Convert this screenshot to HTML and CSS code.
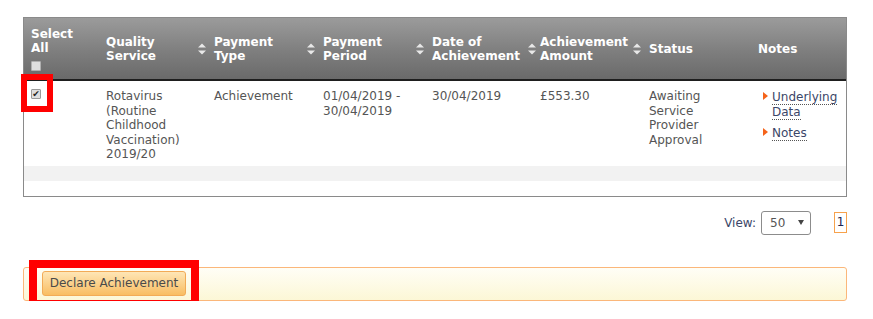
FILE: index.html
```html
<!DOCTYPE html>
<html lang="en">
<head>
    <meta charset="UTF-8">
    <title>Declare Achievement</title>
    <link rel="stylesheet" href="styles.css">
</head>
<body>
    <div class="page">
        <div class="grid">
            <table class="results">
                <colgroup>
                    <col style="width: 65px">
                    <col style="width: 108px">
                    <col style="width: 109px">
                    <col style="width: 109px">
                    <col style="width: 112px">
                    <col style="width: 105px">
                    <col style="width: 118px">
                    <col style="width: 96px">
                </colgroup>
                <thead>
                    <tr>
                        <th class="col-select">Select<br>All<span class="check"></span></th>
                        <th class="col-plain">Quality<br>Service</th>
                        <th class="sortable">
                            <div class="sort-head">
                                <svg class="sort-icon" viewBox="0 0 8 12"><polygon points="0,4.5 4,0.5 8,4.5"/><polygon points="0,7.5 8,7.5 4,11.5"/></svg>
                                <span>Payment<br>Type</span>
                            </div>
                        </th>
                        <th class="sortable">
                            <div class="sort-head">
                                <svg class="sort-icon" viewBox="0 0 8 12"><polygon points="0,4.5 4,0.5 8,4.5"/><polygon points="0,7.5 8,7.5 4,11.5"/></svg>
                                <span>Payment<br>Period</span>
                            </div>
                        </th>
                        <th class="sortable">
                            <div class="sort-head">
                                <svg class="sort-icon" viewBox="0 0 8 12"><polygon points="0,4.5 4,0.5 8,4.5"/><polygon points="0,7.5 8,7.5 4,11.5"/></svg>
                                <span>Date of<br>Achievement</span>
                            </div>
                        </th>
                        <th class="sortable">
                            <div class="sort-head tight">
                                <svg class="sort-icon" viewBox="0 0 8 12"><polygon points="0,4.5 4,0.5 8,4.5"/><polygon points="0,7.5 8,7.5 4,11.5"/></svg>
                                <span>Achievement<br>Amount</span>
                            </div>
                        </th>
                        <th class="sortable">
                            <div class="sort-head">
                                <svg class="sort-icon" viewBox="0 0 8 12"><polygon points="0,4.5 4,0.5 8,4.5"/><polygon points="0,7.5 8,7.5 4,11.5"/></svg>
                                <span>Status</span>
                            </div>
                        </th>
                        <th class="col-notes">Notes</th>
                    </tr>
                </thead>
                <tbody>
                    <tr class="row">
                        <td class="col-select"><span class="check checked">&#10004;</span></td>
                        <td>Rotavirus (Routine Childhood Vaccination) 2019/20</td>
                        <td>Achievement</td>
                        <td>01/04/2019 - 30/04/2019</td>
                        <td>30/04/2019</td>
                        <td class="amount">&pound;553.30</td>
                        <td>Awaiting Service Provider Approval</td>
                        <td class="col-notes">
                            <ul class="note-links">
                                <li><a href="#">Underlying Data</a></li>
                                <li><a href="#">Notes</a></li>
                            </ul>
                        </td>
                    </tr>
                    <tr class="stripe"><td colspan="8"></td></tr>
                </tbody>
            </table>
            <div class="grid-foot"></div>
        </div>

        <div class="pager">
            <span class="view-label">View:</span>
            <div class="view-select">
                <span>50</span>
                <svg class="caret" viewBox="0 0 6 5"><polygon points="0,0 6,0 3,5"/></svg>
            </div>
            <span class="page-num">1</span>
        </div>

        <div class="action-bar">
            <button class="declare-btn">Declare Achievement</button>
        </div>

        <div class="mark mark-check"></div>
        <div class="mark mark-button"></div>
    </div>
</body>
</html>
```

FILE: styles.css
```css
* {
    margin: 0;
    padding: 0;
    box-sizing: border-box;
}

body {
    font-family: "DejaVu Sans", Verdana, sans-serif;
    font-size: 12px;
    color: #555;
    background: #fff;
    padding: 17px 26px 0 23px;
}

.page {
    position: relative;
    width: 824px;
}

.grid {
    border: 1px solid #8a8a8a;
}

.results {
    width: 100%;
    table-layout: fixed;
    border-collapse: collapse;
}

.results th {
    background: linear-gradient(#9b9b9b 0%, #7e7e7e 55%, #6a6a6a 100%);
    color: #fff;
    font-weight: bold;
    text-align: left;
    vertical-align: middle;
    line-height: 14px;
    padding: 8px 0;
    border-bottom: 2px solid #1e1e1e;
    height: 62px;
}

.results th.col-select {
    padding-left: 7px;
}

.results th.col-plain {
    padding-left: 17px;
}

.results th.sortable {
    padding-left: 1px;
}

.results th.col-notes {
    padding-left: 8px;
}

.sort-head {
    display: flex;
    align-items: center;
    gap: 8px;
}

.sort-head.tight {
    gap: 4px;
}

.sort-icon {
    width: 8px;
    height: 12px;
    flex-shrink: 0;
    fill: #e8e8e8;
}

.check {
    display: block;
    width: 10px;
    height: 10px;
    margin-top: 6px;
    background: #dedede;
    border: 1px solid #b0b0b0;
    border-radius: 1px;
}

.check.checked {
    margin-top: 0;
    font-size: 9px;
    line-height: 8px;
    color: #222;
    text-align: center;
    border-color: #9a9a9a;
}

.results td {
    vertical-align: top;
    line-height: 14.5px;
    padding: 8px 6px 4px 17px;
}

.results td.col-select {
    padding-left: 7px;
}

.results td.amount {
    padding-left: 13px;
}

.results td.col-notes {
    padding-left: 13px;
    padding-right: 4px;
}

.stripe td {
    background: #f2f2f2;
    height: 15px;
    padding: 0;
}

.grid-foot {
    height: 15px;
}

.note-links {
    list-style: none;
    padding-top: 1px;
}

.note-links li {
    position: relative;
    padding-left: 9px;
    margin-bottom: 7px;
}

.note-links li::before {
    content: "";
    position: absolute;
    left: 0;
    top: 2px;
    border-left: 5px solid #f5631a;
    border-top: 4.5px solid transparent;
    border-bottom: 4.5px solid transparent;
}

.note-links a {
    color: #3b4668;
    text-decoration: none;
    border-bottom: 1px dotted #555;
}

.pager {
    display: flex;
    justify-content: flex-end;
    align-items: center;
    margin-top: 14px;
    color: #3b4668;
}

.view-label {
    margin-right: 5px;
}

.view-select {
    display: flex;
    align-items: center;
    justify-content: space-between;
    width: 50px;
    height: 24px;
    padding: 0 6px 0 8px;
    border: 1px solid #8c8c8c;
    border-radius: 3px;
    color: #555;
    background: #fff;
}

.caret {
    width: 6px;
    height: 5px;
    fill: #444;
}

.page-num {
    margin-left: 23px;
    width: 13px;
    height: 21px;
    line-height: 19px;
    text-align: center;
    border: 1px solid #f7a24c;
    color: #1b2452;
    background: #fff;
}

.action-bar {
    margin-top: 32px;
    height: 34px;
    padding: 3px 0 0 18px;
    border: 1px solid #fbb77a;
    border-radius: 3px;
    background: linear-gradient(#fffef6, #fcf7d6);
}

.declare-btn {
    font-family: inherit;
    font-size: 12px;
    color: #4a4a4a;
    width: 144px;
    height: 25px;
    border: 1px solid #f2ab57;
    border-radius: 3px;
    background: linear-gradient(#fee6b6, #f9bd62);
    cursor: pointer;
}

.mark {
    position: absolute;
    border: 6px solid #ff0000;
}

.mark-check {
    left: -2px;
    top: 57px;
    width: 32px;
    height: 38px;
}

.mark-button {
    left: 6px;
    top: 243px;
    width: 170px;
    height: 48px;
    border-width: 8px;
}
```
